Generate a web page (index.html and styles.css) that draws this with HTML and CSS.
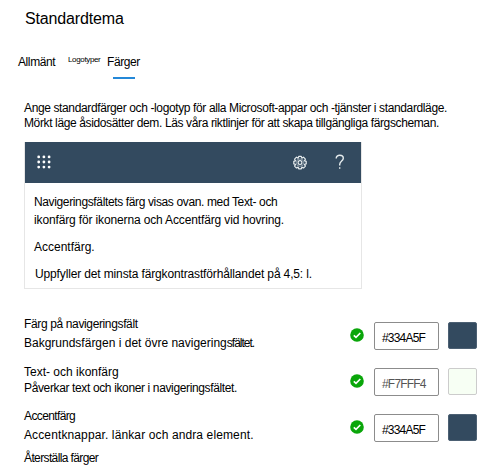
FILE: index.html
```html
<!DOCTYPE html>
<html lang="sv">
<head>
<meta charset="utf-8">
<title>Standardtema</title>
<link rel="stylesheet" href="styles.css">
</head>
<body>
<main class="panel">
  <h1>Standardtema</h1>
  <nav class="tabs">
    <span class="tab general">Allmänt</span>
    <span class="tab logos">Logotyper</span>
    <span class="tab colors">Färger</span>
  </nav>
  <div class="intro">
    <p>Ange standardfärger och -logotyp för alla Microsoft-appar och -tjänster i standardläge.</p>
    <p>Mörkt läge åsidosätter dem. Läs våra riktlinjer för att skapa tillgängliga färgscheman.</p>
  </div>
  <section class="card">
    <header class="bar">
      <svg class="waffle" width="14" height="14" viewBox="0 0 14 14" fill="#fff"><circle cx="1.7" cy="1.9" r="1.4"/><circle cx="6.9" cy="1.9" r="1.4"/><circle cx="12.1" cy="1.9" r="1.4"/><circle cx="1.7" cy="7" r="1.4"/><circle cx="6.9" cy="7" r="1.4"/><circle cx="12.1" cy="7" r="1.4"/><circle cx="1.7" cy="12.1" r="1.4"/><circle cx="6.9" cy="12.1" r="1.4"/><circle cx="12.1" cy="12.1" r="1.4"/></svg>
      <svg class="gear" width="16" height="16" viewBox="0 0 16 16" fill="none" stroke="#e6ecee" stroke-width="1.2" stroke-linejoin="round"><path d="M6.700 1.400h2.600l.5 1.700 1.700-.9 1.900 1.900-.9 1.700 1.700.5v2.600l-1.700.5.9 1.700-1.900 1.900-1.700-.9-.5 1.700H6.700l-.5-1.700-1.700.9-1.900-1.900.9-1.700-1.700-.5V6.300l1.700-.5-.9-1.700L4.500 2.200l1.700.9z"/><circle cx="8" cy="7.600" r="3.700" stroke-width=".5"/><circle cx="8" cy="7.600" r="1.900"/></svg>
      <svg class="help" width="10" height="16" viewBox="0 0 10 16" fill="none" stroke="#e6ecee" stroke-width="1.400"><path d="M1.200 4.600C1.200 2.400 2.700 1.300 4.700 1.300S8.300 2.400 8.300 4.300C8.300 7 4.700 7.300 4.700 10.600V11.400"/><path d="M4.700 13.200v1.500"/></svg>
    </header>
    <div class="preview">
      <p class="narrow">Navigeringsfältets färg visas ovan. med Text- och</p>
      <p class="close">ikonfärg för ikonerna och Accentfärg vid hovring.</p>
      <p>Accentfärg.</p>
      <p class="close contrast">Uppfyller det minsta färgkontrastförhållandet på 4,5: l.</p>
    </div>
  </section>
  <section class="settings">
    <div class="labels">
      <p class="narrow">Färg på navigeringsfält</p>
      <p>Bakgrundsfärgen i det övre navigering<span class="squeezed">sfältet.</span></p>
      <p>Text- och ikonfärg</p>
      <p class="narrow">Påverkar text och ikoner i navigeringsfältet.</p>
      <p class="tight">Accentfärg</p>
      <p class="wide">Accentknappar. länkar och andra element.</p>
      <p class="tight">Återställa färger</p>
    </div>
    <div class="values">
      <div class="value"><svg width="14" height="14" viewBox="0 0 14 14"><circle cx="7" cy="7" r="6.800" fill="#0aa60a"/><path d="M3.800 7.300l2.200 2.100 4.300-4.400" fill="none" stroke="#fff" stroke-width="1.600"/></svg><div class="field">#334A5F</div><div class="swatch navy"></div></div>
      <div class="value"><svg width="14" height="14" viewBox="0 0 14 14"><circle cx="7" cy="7" r="6.800" fill="#0aa60a"/><path d="M3.800 7.300l2.200 2.100 4.300-4.400" fill="none" stroke="#fff" stroke-width="1.600"/></svg><div class="field muted">#F7FFF4</div><div class="swatch pale"></div></div>
      <div class="value"><svg width="14" height="14" viewBox="0 0 14 14"><circle cx="7" cy="7" r="6.800" fill="#0aa60a"/><path d="M3.800 7.300l2.200 2.100 4.300-4.400" fill="none" stroke="#fff" stroke-width="1.600"/></svg><div class="field">#334A5F</div><div class="swatch navy"></div></div>
    </div>
  </section>
</main>
</body>
</html>
```

FILE: styles.css
```css
* { box-sizing: border-box; }
body { margin: 0; background: #fff; color: #000; font: 12px/16px "Liberation Sans", Arial, sans-serif; }
.panel { width: 500px; height: 472px; padding: 9px 0 0 24px; overflow: hidden; }
h1, p { margin: 0; white-space: nowrap; }
h1 { font-size: 16px; line-height: 20px; height: 20px; font-weight: 400; padding-left: 1px; letter-spacing: -.15px; }
.tabs { display: flex; height: 25px; margin: 25px 0 0 -6px; letter-spacing: -.4px; }
.tab { white-space: nowrap; }
.general { width: 50px; }
.logos { width: 39px; font-size: 8px; line-height: 12px; letter-spacing: -.35px; }
.colors { display: flex; flex-direction: column; height: 25px; justify-content: space-between; }
.colors::after { content: ""; width: 22px; height: 2px; margin-left: 6px; background: #2488d8; }
.intro { margin-top: 21px; letter-spacing: -.375px; }
.intro p { height: 15px; }
.narrow { letter-spacing: -.365px; }
.close { letter-spacing: -.14px; }
.contrast { padding-left: 1px; }
.tight { letter-spacing: -.62px; }
.wide { letter-spacing: .12px; }
.squeezed { letter-spacing: -1px; }
.card { width: 338px; height: 147px; margin-top: 12px; border: 1px solid #e6e6e6; }
.bar { display: flex; align-items: center; height: 41px; margin: -1px 0 0; padding: 0 17px 0 12px; background: #334a5f; }
.waffle { margin-top: -2px; }
.gear { margin: 0 0 0 auto; }
.help { margin: -1px -1px 0 27px; }
.preview { padding: 11px 9px; }
.preview p { height: 18px; }
.preview p:nth-child(n+2) { height: 27px; }
.settings { display: flex; margin-top: 27px; }
.labels { width: 326px; }
.labels p { height: 19px; }
.labels p:nth-child(2) { height: 29px; }
.labels p:nth-child(3) { height: 16px; }
.labels p:nth-child(4) { height: 28px; }
.labels p:nth-child(6) { height: 23px; }
.values { display: flex; flex-direction: column; gap: 18px; padding-top: 6px; }
.value { display: flex; height: 28px; }
.value svg { margin-top: 6px; }
.field { width: 65px; height: 28px; margin-left: 10px; padding: 7px 0 0 7px; border: 1px solid #8c8c8c; border-radius: 2px; letter-spacing: -.8px; }
.muted { color: #555; }
.swatch { width: 29px; height: 27px; margin-left: 9px; border: 1px solid #4c6073; border-radius: 2px; }
.navy { background: #334a5f; }
.pale { background: #f7fff4; border-color: #ccc; }
```
